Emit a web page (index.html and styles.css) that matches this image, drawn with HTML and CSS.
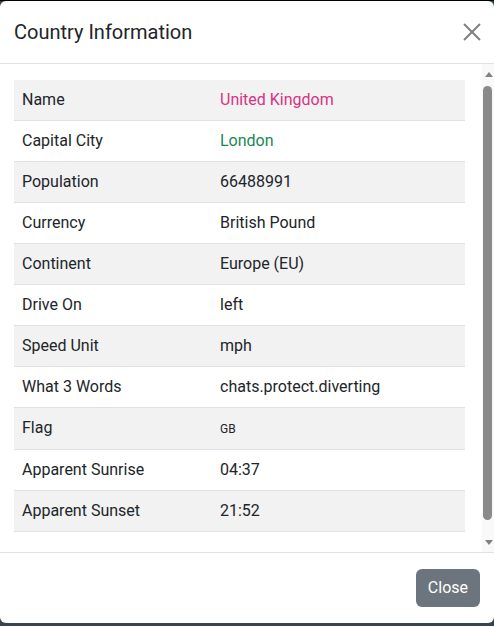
FILE: index.html
```html
<!DOCTYPE html>
<html lang="en">
<head>
<meta charset="utf-8">
<title>Country Information</title>
<link rel="stylesheet" href="styles.css">
</head>
<body>
<div class="modal">
  <div class="modal-header">
    <h5 class="modal-title">Country Information</h5>
    <button class="btn-close" aria-label="Close">
      <svg width="18" height="18" viewBox="0 0 18 18"><path d="M1 1L17 17M17 1L1 17" stroke="currentColor" stroke-width="2" fill="none"/></svg>
    </button>
  </div>
  <div class="modal-main">
    <div class="modal-body">
      <table class="table">
        <tbody>
          <tr><td>Name</td><td class="pink">United Kingdom</td></tr>
          <tr><td>Capital City</td><td class="green">London</td></tr>
          <tr><td>Population</td><td>66488991</td></tr>
          <tr><td>Currency</td><td>British Pound</td></tr>
          <tr><td>Continent</td><td>Europe (EU)</td></tr>
          <tr><td>Drive On</td><td>left</td></tr>
          <tr><td>Speed Unit</td><td>mph</td></tr>
          <tr><td>What 3 Words</td><td>chats.protect.diverting</td></tr>
          <tr><td>Flag</td><td><span class="flag">GB</span></td></tr>
          <tr><td>Apparent Sunrise</td><td>04:37</td></tr>
          <tr><td>Apparent Sunset</td><td>21:52</td></tr>
        </tbody>
      </table>
    </div>
    <div class="scrollbar" aria-hidden="true">
      <div class="sb-btn"><svg width="8" height="5" viewBox="0 0 8 5"><path d="M0 5L4 0L8 5Z" fill="#808080"/></svg></div>
      <div class="sb-track"><div class="sb-thumb"></div></div>
      <div class="sb-btn"><svg width="8" height="5" viewBox="0 0 8 5"><path d="M0 0L4 5L8 0Z" fill="#808080"/></svg></div>
    </div>
  </div>
  <div class="modal-footer">
    <button class="btn-secondary">Close</button>
  </div>
</div>
</body>
</html>
```
FILE: styles.css
```css
* { box-sizing: border-box; }
html, body { margin: 0; padding: 0; height: 100%; }
body {
  background: #36464a;
  border-top: 1px solid #000;
  font-family: Roboto, "Liberation Sans", sans-serif;
  color: #212529;
  font-size: 16px;
  line-height: 1.5;
  overflow: hidden;
}
.modal {
  background: #fff;
  height: 622px;
  border-radius: 6px;
  display: flex;
  flex-direction: column;
  overflow: hidden;
}
.modal-header {
  display: flex;
  align-items: center;
  justify-content: space-between;
  padding: 16px 13px 16px 14px;
  border-bottom: 1px solid #dee2e6;
  flex: none;
}
.modal-title {
  margin: 0;
  font-size: 20px;
  font-weight: 400;
  line-height: 30px;
}
.btn-close {
  border: 0;
  background: none;
  padding: 0;
  width: 18px;
  height: 18px;
  color: #7f7f7f;
  display: flex;
  cursor: pointer;
}
.modal-main {
  flex: 1;
  min-height: 0;
  display: flex;
}
.modal-body {
  flex: 1;
  min-width: 0;
  overflow: hidden;
  padding: 16px 17px 16px 14px;
}
.scrollbar {
  width: 12px;
  flex: none;
  background: #f9f9f9;
  display: flex;
  flex-direction: column;
}
.sb-btn {
  height: 20px;
  flex: none;
  display: flex;
  align-items: center;
  justify-content: center;
  padding-left: 1px;
}
.sb-track {
  flex: 1;
  padding: 2px 2px 0 1px;
}
.sb-thumb {
  height: 434px;
  background: #8a8a8a;
  border-radius: 5px;
}
.table {
  width: 100%;
  border-collapse: collapse;
  margin-bottom: 16px;
}
.table td {
  padding: 8px;
  border-bottom: 1px solid #dee2e6;
  line-height: 24px;
  vertical-align: top;
}
.table td:first-child { width: 198px; }
.table tr:nth-child(odd) td { background: #f2f2f2; }
.pink { color: #d63384; }
.green { color: #198754; }
.flag { font-size: 12px; }
.modal-footer {
  flex: none;
  border-top: 1px solid #dee2e6;
  display: flex;
  justify-content: flex-end;
  padding: 16px 14px 16px;
}
.btn-secondary {
  background: #6c757d;
  color: #fff;
  border: 0;
  border-radius: 6px;
  font-family: inherit;
  font-size: 16px;
  line-height: 24px;
  padding: 7px 12px;
}
```
